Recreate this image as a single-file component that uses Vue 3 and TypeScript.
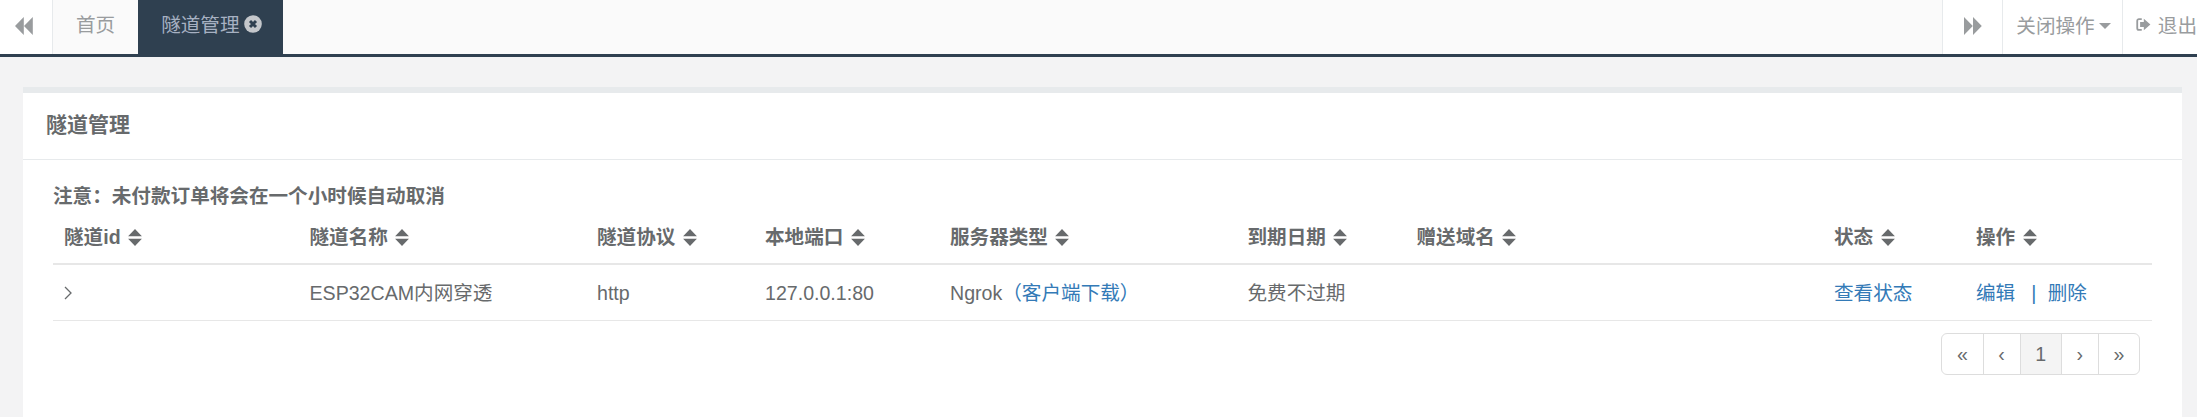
<script setup lang="ts">
interface Col { label: string; cls: string }
const cols: Col[] = [
  { label: '隧道id', cls: 'c1' },
  { label: '隧道名称', cls: 'c2' },
  { label: '隧道协议', cls: 'c3' },
  { label: '本地端口', cls: 'c4' },
  { label: '服务器类型', cls: 'c5' },
  { label: '到期日期', cls: 'c6' },
  { label: '赠送域名', cls: 'c7' },
  { label: '状态', cls: 'c8' },
  { label: '操作', cls: 'c9' },
]
const pages = ['«', '‹', '1', '›', '»']
</script>

<template>
  <div class="page">
    <nav class="topbar">
      <button class="nav-arrow left-arrow" aria-label="后退">
        <svg viewBox="0 0 18 18" width="18" height="18"><path d="M8.800 0v18L0 9zM17.800 0v18L9 9z" fill="#999c9e" /></svg>
      </button>
      <div class="tabs">
        <a class="tab">首页</a>
        <a class="tab active">隧道管理
          <svg class="close" viewBox="0 0 18 18" width="18" height="18"><circle cx="9" cy="9" r="8.800" fill="#c4c7cb" /><path d="M6 6l6 6M12 6l-6 6" stroke="#2f4050" stroke-width="3" /></svg>
        </a>
      </div>
      <button class="nav-arrow right-arrow" aria-label="前进">
        <svg viewBox="0 0 18 18" width="18" height="18"><path d="M0 0v18l8.800-9zM9 0v18l8.800-9z" fill="#999c9e" /></svg>
      </button>
      <button class="close-ops">关闭操作<span class="caret"></span></button>
      <a class="logout">
        <svg viewBox="0 0 18 16" width="19" height="17"><path d="M7 1.500H3.500A2 2 0 0 0 1.500 3.500v9a2 2 0 0 0 2 2H7" fill="none" stroke="#999c9e" stroke-width="2.200" /><path d="M9.500 1L17.500 8l-8 7v-4H5V5h4.500z" fill="#999c9e" /></svg>
        <span class="logout-text">退出</span>
      </a>
    </nav>

    <main class="content">
      <section class="panel">
        <header class="panel-title">隧道管理</header>
        <div class="panel-body">
          <p class="note">注意&#xFF1A;未付款订单将会在一个小时候自动取消</p>
          <table class="grid">
            <colgroup>
              <col v-for="c in cols" :key="c.cls" :class="c.cls" />
            </colgroup>
            <thead>
              <tr>
                <th v-for="c in cols" :key="c.label">
                  {{ c.label }}
                  <svg class="sort" viewBox="0 0 13 16" width="14" height="17"><path d="M6.500 0L13 6.800H0zM6.500 16L0 9.200h13z" fill="#676a6c" /></svg>
                </th>
              </tr>
            </thead>
            <tbody>
              <tr>
                <td><svg class="chevron" viewBox="0 0 8 14" width="8" height="14"><path d="M1 1l6 6-6 6" fill="none" stroke="#676a6c" stroke-width="1.300" /></svg></td>
                <td>ESP32CAM内网穿透</td>
                <td>http</td>
                <td>127.0.0.1:80</td>
                <td>Ngrok<a>&#xFF08;客户端下载&#xFF09;</a></td>
                <td>免费不过期</td>
                <td></td>
                <td><a>查看状态</a></td>
                <td><a>编辑</a><a class="sep">|</a><a>删除</a></td>
              </tr>
            </tbody>
          </table>
          <div class="pager-row">
            <ul class="pager">
              <li v-for="p in pages" :key="p" :class="{ current: p === '1' }">{{ p }}</li>
            </ul>
          </div>
        </div>
      </section>
    </main>
  </div>
</template>

<style>
html, body { margin: 0; background: #f3f3f4; overflow: hidden; }
</style>

<style scoped>
.page {
  width: 2197px;
  height: 417px;
  overflow: hidden;
  background: #f3f3f4;
  font-family: "Liberation Sans", "Noto Sans CJK SC", sans-serif;
  font-size: 19.6px;
  color: #676a6c;
}
.topbar {
  display: flex;
  height: 54px;
  box-sizing: content-box;
  border-bottom: 3px solid #2f4050;
  background: #fafafa;
  white-space: nowrap;
  overflow: hidden;
}
.nav-arrow, .close-ops {
  border: 0;
  background: #fff;
  font: inherit;
  color: #999c9e;
  padding: 0;
  display: flex;
  align-items: center;
  justify-content: center;
  flex: none;
}
.nav-arrow svg { margin-top: -2px; }
.left-arrow { width: 52px; border-right: 1px solid #e7eaec; box-sizing: content-box; padding-right: 0; }
.left-arrow svg { margin-right: 4px; }
.tabs { display: flex; flex: 1; }
.tab {
  display: flex;
  align-items: center;
  gap: 4px;
  padding: 0 23px 7px;
  color: #999c9e;
}
.tab.active { background: #2f4050; color: #a7b1c2; padding-right: 21px; }
.right-arrow { width: 60px; border-left: 1px solid #e7eaec; box-sizing: border-box; }
.close-ops {
  width: 121px;
  border-left: 1px solid #e7eaec;
  border-right: 1px solid #e7eaec;
  box-sizing: border-box;
  gap: 4px;
  padding: 0 0 5px 2px;
}
.caret { border-top: 6px solid #999c9e; border-left: 6px solid transparent; border-right: 6px solid transparent; margin-top: 2px; }
.logout {
  display: flex;
  align-items: center;
  gap: 7px;
  flex: none;
  width: 74px;
  box-sizing: border-box;
  padding: 0 0 6px 13px;
  background: #fff;
  color: #999c9e;
}
.logout-text { flex: none; }
.content { padding: 30px 15px 0 23px; }
.panel {
  background: #fff;
  border-top: 6px solid #e7eaec;
  height: 330px;
}
.panel-title {
  height: 67px;
  line-height: 64px;
  box-sizing: border-box;
  padding-left: 23px;
  font-size: 21px;
  font-weight: 700;
  border-bottom: 1px solid #e7eaec;
}
.panel-body { padding: 23px 30px 0; }
.note { margin: 0; font-weight: 700; line-height: 26px; }
.grid { width: 2099px; table-layout: fixed; border-collapse: collapse; }
.c1 { width: 245.500px; }
.c2 { width: 287.500px; }
.c3 { width: 168px; }
.c4 { width: 185px; }
.c5 { width: 297.500px; }
.c6 { width: 169px; }
.c7 { width: 417.500px; }
.c8 { width: 142px; }
.c9 { width: 187px; }
th {
  text-align: left;
  font-weight: 700;
  padding: 1px 11px 0;
  height: 53px;
  line-height: 22px;
  border-bottom: 2px solid #e7e7e7;
  white-space: nowrap;
}
td {
  padding: 0 11px;
  height: 55px;
  line-height: 22px;
  border-bottom: 1px solid #e7e7e7;
  white-space: nowrap;
}
a { color: #337ab7; }
.sort { margin-left: 2px; vertical-align: -2px; }
.chevron { display: block; margin-left: 0; }
.sep { margin: 0 11.500px 0 16px; }
.pager-row { display: flex; justify-content: flex-end; padding: 12px 12px 0 0; }
.pager {
  list-style: none;
  display: flex;
  margin: 0;
  padding: 0;
  border: 1px solid #ddd;
  border-radius: 6px;
  overflow: hidden;
}
.pager li {
  height: 40px;
  line-height: 40px;
  padding: 0 14.700px;
  text-align: center;
  border-left: 1px solid #ddd;
  color: #676a6c;
}
.pager li:first-child { border-left: 0; }
.pager .current { background: #f4f4f4; }
</style>
